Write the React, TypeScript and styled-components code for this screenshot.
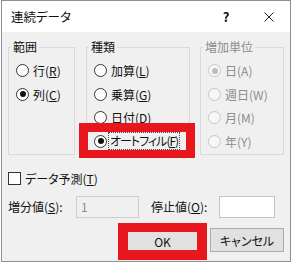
import styled, { createGlobalStyle } from "styled-components";

const GlobalStyle = createGlobalStyle`
  body {
    margin: 0;
    background: #fff;
    font-family: "Noto Sans CJK JP", "Noto Sans", sans-serif;
  }
`;

const Dialog = styled.div`
  box-sizing: border-box;
  width: 290px;
  height: 262px;
  margin-left: 1px;
  border: 1px solid #8f8f8f;
  display: flex;
  flex-direction: column;
  font-size: 12px;
  color: #111;
  font-feature-settings: "palt";
  white-space: nowrap;
`;

const TitleBar = styled.div`
  height: 31px;
  background: #fff;
  display: flex;
  align-items: center;
  padding-left: 9px;
`;

const Title = styled.span`
  flex: 1;
  font-size: 12.5px;
`;

const TitleButton = styled.span<{ $w: number }>`
  width: ${({ $w }) => $w}px;
  height: 31px;
  display: flex;
  align-items: center;
  justify-content: center;
  font-weight: 700;
  font-size: 13px;
`;

const Body = styled.div`
  flex: 1;
  background: #f0f0f0;
  padding: 8px 6px 0 6px;
  display: flex;
  flex-direction: column;
`;

const Groups = styled.div`
  display: flex;
  gap: 11px;
`;

const Group = styled.fieldset<{ $w: number; $disabled?: boolean }>`
  box-sizing: border-box;
  width: ${({ $w }) => $w}px;
  height: 115px;
  margin: 0;
  padding: 0;
  min-width: 0;
  border: 1px solid #dadada;
  color: ${({ $disabled }) => ($disabled ? "#8d8d8d" : "#111")};
  &:last-child {
    margin-left: -1px;
  }
`;

const Legend = styled.legend`
  margin-left: 2px;
  padding: 0 2px;
  line-height: 14px;
  font-size: 12px;
`;

const Options = styled.div`
  display: flex;
  flex-direction: column;
  padding: 5px 0 0 7px;
`;

const Row = styled.div<{ $highlight?: boolean }>`
  box-sizing: border-box;
  display: flex;
  align-items: center;
  gap: ${({ $highlight }) => ($highlight ? "3px" : "4px")};
  height: ${({ $highlight }) => ($highlight ? "35px" : "23.5px")};
  ${({ $highlight }) =>
    $highlight &&
    `
    width: 116px;
    margin: -6.5px 0 -5px -15px;
    padding-left: 6px;
    border: 9px solid #e8161d;
    border-bottom-width: 8px;
  `}
`;

const RadioCircle = styled.span<{ $checked?: boolean; $disabled?: boolean }>`
  box-sizing: border-box;
  width: 13px;
  height: 13px;
  flex-shrink: 0;
  border-radius: 50%;
  border: 1px solid ${({ $disabled }) => ($disabled ? "#c6c6c6" : "#333")};
  background: ${({ $disabled }) => ($disabled ? "#f7f7f7" : "#fff")};
  display: flex;
  align-items: center;
  justify-content: center;
  &::after {
    content: "";
    display: ${({ $checked }) => ($checked ? "block" : "none")};
    width: 6px;
    height: 6px;
    border-radius: 50%;
    background: ${({ $disabled }) => ($disabled ? "#bdbdbd" : "#111")};
  }
`;

const FocusLabel = styled.span`
  outline: 1px dotted #444;
  outline-offset: 1px;
  line-height: 14px;
  letter-spacing: -1px;
  flex-shrink: 0;
`;

const CheckRow = styled.div`
  display: flex;
  align-items: center;
  gap: 4px;
  height: 16px;
  margin-top: 15px;
`;

const CheckBox = styled.span`
  box-sizing: border-box;
  width: 13px;
  height: 13px;
  border: 1px solid #333;
  background: #fff;
`;

const FieldRow = styled.div`
  display: flex;
  align-items: center;
  height: 23px;
  margin-top: 9px;
`;

const FieldLabel = styled.span<{ $gap?: number }>`
  width: 68px;
  margin-left: ${({ $gap }) => $gap ?? 0}px;
  color: #111;
`;

const Input = styled.div<{ $w: number; $disabled?: boolean }>`
  box-sizing: border-box;
  width: ${({ $w }) => $w}px;
  height: 22px;
  border: 1px solid ${({ $disabled }) => ($disabled ? "#cfcfcf" : "#c4c4c4")};
  background: ${({ $disabled }) => ($disabled ? "#f0f0f0" : "#fff")};
  color: #8d8d8d;
  padding-left: 4px;
  display: flex;
  align-items: center;
`;

const ButtonRow = styled.div`
  display: flex;
  justify-content: flex-end;
  align-items: flex-start;
  gap: 3px;
  margin-top: 5px;
`;

const Highlight = styled.div`
  box-sizing: border-box;
  width: 89px;
  height: 37px;
  border: 10px solid #e8161d;
  border-top-width: 9px;
`;

const Button = styled.div<{ $w?: number }>`
  box-sizing: border-box;
  width: ${({ $w }) => ($w ? `${$w}px` : "100%")};
  height: ${({ $w }) => ($w ? "24px" : "100%")};
  margin-top: ${({ $w }) => ($w ? "5px" : "0")};
  border: ${({ $w }) => ($w ? "1px solid #adadad" : "none")};
  background: #e1e1e1;
  display: flex;
  align-items: center;
  justify-content: center;
`;

type Opt = { label: string; key: string; checked?: boolean; focus?: boolean };

const RadioGroup = ({ title, w, options, disabled }: { title: string; w: number; options: Opt[]; disabled?: boolean }) => (
  <Group $w={w} $disabled={disabled}>
    <Legend>{title}</Legend>
    <Options>
      {options.map((o) => {
        const text = (
          <>
            {o.label}({disabled ? o.key : <u>{o.key}</u>})
          </>
        );
        return (
          <Row key={o.label} $highlight={o.focus}>
            <RadioCircle $checked={o.checked} $disabled={disabled} />
            {o.focus ? <FocusLabel>{text}</FocusLabel> : <span>{text}</span>}
          </Row>
        );
      })}
    </Options>
  </Group>
);

const CloseIcon = () => (
  <svg width="10" height="10" viewBox="0 0 10 10">
    <path d="M0.5 0.5 L9.5 9.5 M9.5 0.5 L0.5 9.5" stroke="#222" strokeWidth="1" />
  </svg>
);

export default function App() {
  return (
    <>
      <GlobalStyle />
      <Dialog>
        <TitleBar>
          <Title>連続データ</Title>
          <TitleButton $w={44}>?</TitleButton>
          <TitleButton $w={42}>
            <CloseIcon />
          </TitleButton>
        </TitleBar>
        <Body>
          <Groups>
            <RadioGroup
              title="範囲"
              w={67}
              options={[
                { label: "行", key: "R" },
                { label: "列", key: "C", checked: true },
              ]}
            />
            <RadioGroup
              title="種類"
              w={104}
              options={[
                { label: "加算", key: "L" },
                { label: "乗算", key: "G" },
                { label: "日付", key: "D" },
                { label: "オートフィル", key: "F", checked: true, focus: true },
              ]}
            />
            <RadioGroup
              title="増加単位"
              w={84}
              disabled
              options={[
                { label: "日", key: "A", checked: true },
                { label: "週日", key: "W" },
                { label: "月", key: "M" },
                { label: "年", key: "Y" },
              ]}
            />
          </Groups>
          <CheckRow>
            <CheckBox />
            <span>
              データ予測(<u>T</u>)
            </span>
          </CheckRow>
          <FieldRow>
            <FieldLabel>
              増分値(<u>S</u>):
            </FieldLabel>
            <Input $w={63} $disabled>
              1
            </Input>
            <FieldLabel $gap={12}>
              停止値(<u>O</u>):
            </FieldLabel>
            <Input $w={56} />
          </FieldRow>
          <ButtonRow>
            <Highlight>
              <Button>OK</Button>
            </Highlight>
            <Button $w={74}>キャンセル</Button>
          </ButtonRow>
        </Body>
      </Dialog>
    </>
  );
}
